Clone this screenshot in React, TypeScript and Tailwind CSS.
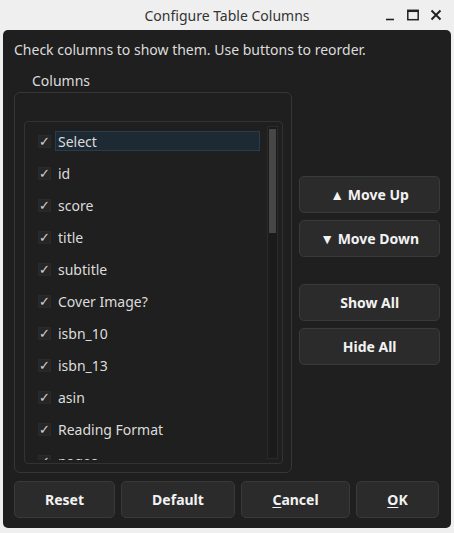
import { useState } from 'react';

const COLUMNS = [
  'Select',
  'id',
  'score',
  'title',
  'subtitle',
  'Cover Image?',
  'isbn_10',
  'isbn_13',
  'asin',
  'Reading Format',
  'pages',
];

function DialogButton({ label, className = '' }: { label: React.ReactNode; className?: string }) {
  return (
    <button
      className={`h-[37px] rounded-[5px] border border-[#3a3a3a] bg-[#2b2b2b] text-[14px] font-bold text-[#f2f2f2] ${className}`}
    >
      {label}
    </button>
  );
}

export default function App() {
  const [selected] = useState(0);

  return (
    <div
      className="w-[454px] h-[533px] bg-[#efefef] flex flex-col overflow-hidden"
      style={{ fontFamily: '"Noto Sans", "Open Sans", sans-serif' }}
    >
      {/* Title bar */}
      <div className="h-[30px] shrink-0 relative flex items-center justify-center">
        <span className="text-[14px] text-[#333333]">Configure Table Columns</span>
        <div className="absolute right-[12px] top-0 h-[30px] flex items-center gap-[11px]">
          <svg width="12" height="12" viewBox="0 0 12 12">
            <path d="M2 10.5h8" stroke="#222" strokeWidth="1.6" />
          </svg>
          <svg width="12" height="12" viewBox="0 0 12 12">
            <rect x="0.8" y="1.3" width="10.4" height="9.4" fill="none" stroke="#222" strokeWidth="1.5" />
            <path d="M0.8 2.3h10.4" stroke="#222" strokeWidth="1.5" />
          </svg>
          <svg width="12" height="12" viewBox="0 0 12 12">
            <path d="M1.5 1.5l9 9M10.5 1.5l-9 9" stroke="#222" strokeWidth="2" />
          </svg>
        </div>
      </div>

      {/* Window body */}
      <div className="mx-[3px] h-[498px] rounded-[5px] bg-[#1f1f1f] flex flex-col px-[11px] pt-[10px] pb-[10px] text-[#dcdcdc]">
        <div className="text-[14px] leading-[20px]">Check columns to show them. Use buttons to reorder.</div>

        <div className="flex-1 flex mt-[11px]">
          {/* Group box */}
          <div className="w-[279px] flex flex-col">
            <div className="text-[14px] leading-[20px] pl-[18px]">Columns</div>
            <div className="mt-[1px] flex-1 rounded-[6px] border border-[#363636] pt-[28px] pl-[9px] pr-[8px] pb-[8px] flex">
              <div className="flex-1 rounded-[4px] border border-[#323232] flex pr-[4px]">
                <div className="flex-1 h-[338px] overflow-hidden pt-[3px] pl-[13px]">
                  {COLUMNS.map((c, i) => (
                    <div key={c} className="h-[32px] flex items-center">
                      <div className="w-[13px] h-[13px] bg-[#262626] border border-[#2a2a2a] flex items-center justify-center text-[13px] leading-none text-[#d4d4d4]">
                        ✓
                      </div>
                      <div
                        className={`ml-[4px] h-[20px] w-[205px] flex items-center pl-[2px] text-[14px] ${
                          i === selected ? 'bg-[#1d2a33] border border-[#283d4b]' : 'border border-transparent'
                        }`}
                      >
                        {c}
                      </div>
                    </div>
                  ))}
                </div>
                {/* Scrollbar */}
                <div className="w-[11px] mt-[4px] mb-[4px] bg-[#1b1b1b] border border-[#2a2a2a] p-[1px]">
                  <div className="h-[104px] mt-[1px] bg-[#474747]" />
                </div>
              </div>
            </div>
          </div>

          {/* Side buttons */}
          <div className="ml-[7px] w-[141px] flex flex-col pt-[105px]">
            <DialogButton label="▲ Move Up" />
            <DialogButton label="▼ Move Down" className="mt-[7px]" />
            <DialogButton label="Show All" className="mt-[27px]" />
            <DialogButton label="Hide All" className="mt-[7px]" />
          </div>
        </div>

        {/* Bottom buttons */}
        <div className="mt-[8px] flex gap-[6px]">
          <DialogButton label="Reset" className="w-[101px]" />
          <DialogButton label="Default" className="w-[114px]" />
          <DialogButton
            label={
              <>
                <span className="underline underline-offset-2">C</span>ancel
              </>
            }
            className="w-[109px]"
          />
          <DialogButton
            label={
              <>
                <span className="underline underline-offset-2">O</span>K
              </>
            }
            className="w-[83px]"
          />
        </div>
      </div>
    </div>
  );
}
